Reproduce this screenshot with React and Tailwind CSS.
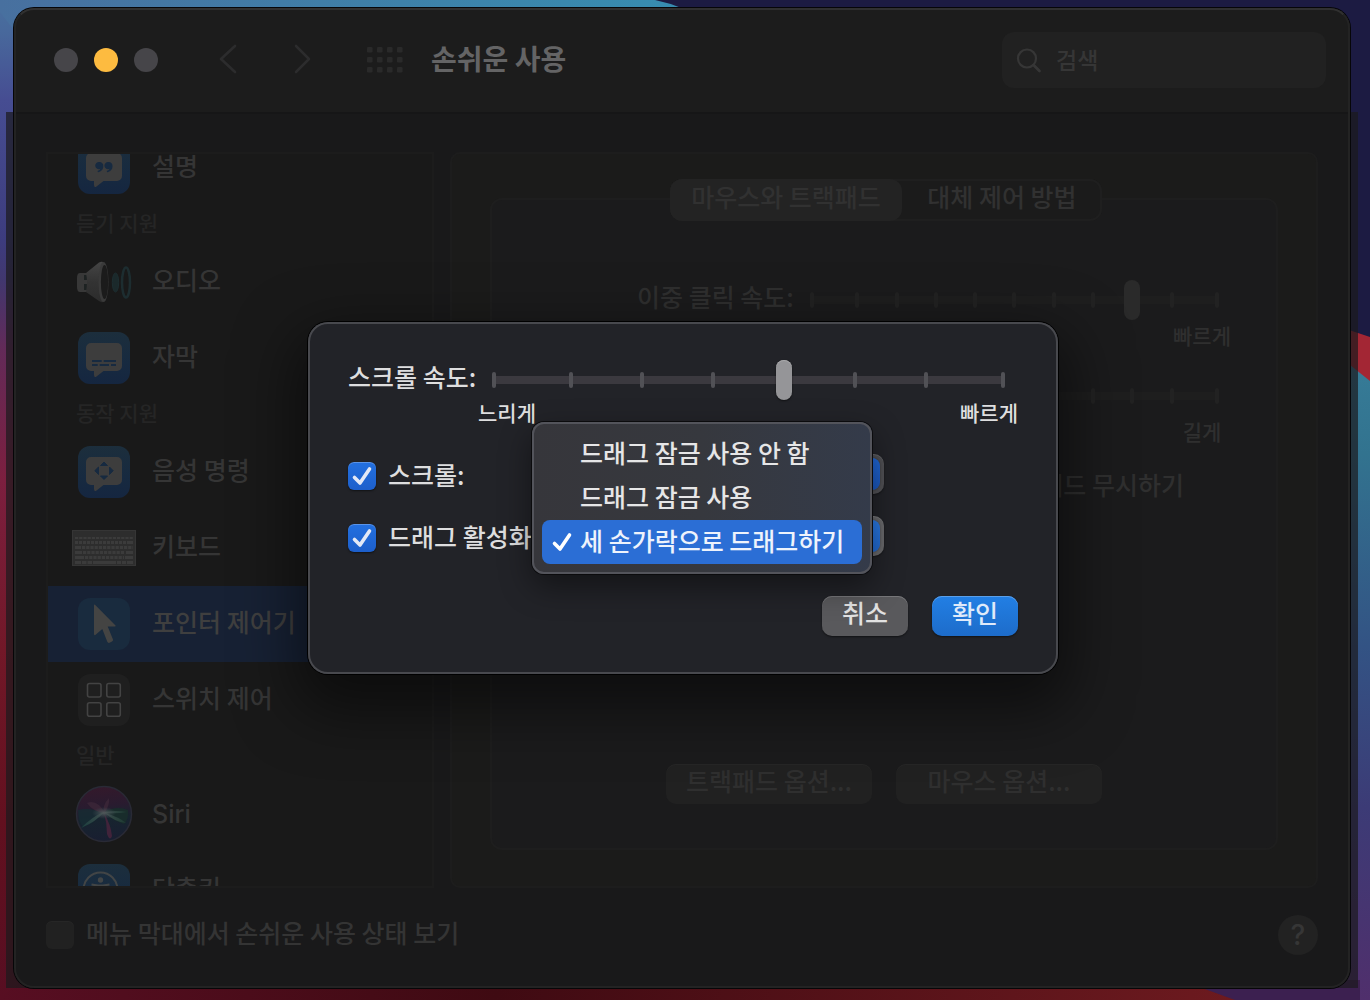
import React, { useState } from 'react';
import clsx from 'clsx';

const Wallpaper = () => (
  <svg
    className="absolute inset-0 w-full h-full"
    viewBox="0 0 1370 1000"
    preserveAspectRatio="none"
    aria-hidden="true"
  >
    <defs>
      <linearGradient id="wpTop" x1="0" x2="1" y1="0" y2="0">
        <stop offset="0" stopColor="#48709f" />
        <stop offset="1" stopColor="#378db0" />
      </linearGradient>
      <linearGradient id="wpLeft" x1="0" x2="0" y1="0" y2="1">
        <stop offset="0" stopColor="#48709f" />
        <stop offset="0.03" stopColor="#48699c" />
        <stop offset="0.1" stopColor="#464d92" />
        <stop offset="0.24" stopColor="#3d3c7e" />
        <stop offset="0.28" stopColor="#41376f" />
        <stop offset="0.35" stopColor="#632a58" />
        <stop offset="0.48" stopColor="#7c1f3f" />
        <stop offset="0.65" stopColor="#721828" />
        <stop offset="0.82" stopColor="#62101f" />
        <stop offset="1" stopColor="#570e22" />
      </linearGradient>
      <linearGradient id="wpRight" x1="0" x2="0" y1="0" y2="1">
        <stop offset="0" stopColor="#377c98" />
        <stop offset="0.15" stopColor="#32738f" />
        <stop offset="0.45" stopColor="#335384" />
        <stop offset="0.7" stopColor="#3c3b76" />
        <stop offset="1" stopColor="#502f6c" />
      </linearGradient>
      <linearGradient id="wpBottom" x1="0" x2="1" y1="0" y2="0">
        <stop offset="0" stopColor="#570e22" />
        <stop offset="0.4" stopColor="#3f0a12" />
        <stop offset="1" stopColor="#6d1a1f" />
      </linearGradient>
    </defs>
    <rect width="1370" height="1000" fill="#1c1b42" />
    <rect width="60" height="1000" fill="url(#wpLeft)" />
    <path d="M0 0H655Q670 3 684 9V30H14L0 12Z" fill="url(#wpTop)" />
    <path d="M1340 327L1370 337V382L1340 360Z" fill="#a32634" />
    <path d="M1340 357L1370 381V1000H1340Z" fill="url(#wpRight)" />
    <path d="M20 980H1180L1240 1000H0Z" fill="url(#wpBottom)" />
    <path d="M1180 980H1360V1000H1235Z" fill="#3c2050" />
  </svg>
);

const Tile = ({ children, plain }) => (
  <svg width="52" height="52" viewBox="0 0 52 52" fill="none" aria-hidden="true">
    <defs>
      <linearGradient id="tileBlue" x1="0" x2="0" y1="0" y2="1">
        <stop offset="0" stopColor="#1c2e3c" />
        <stop offset="0.6" stopColor="#172a40" />
        <stop offset="1" stopColor="#152640" />
      </linearGradient>
    </defs>
    <rect width="52" height="52" rx="12" fill={plain ? '#1f1f1f' : 'url(#tileBlue)'} />
    {children}
  </svg>
);

const Bubble = () => (
  <path
    d="M13 11H39A5 5 0 0 1 44 16V34A5 5 0 0 1 39 39H25.500L18.500 44.500Q16 46 16 43V39H13A5 5 0 0 1 8 34V16A5 5 0 0 1 13 11Z"
    fill="#3d3d3d"
  />
);

const DescriptionIcon = () => (
  <Tile>
    <Bubble />
    <g fill="#172a40">
      <path d="M21.500 20A3.800 3.800 0 0 1 25.300 24.200C25.300 27.500 23 29.800 20 30.200L19.500 29C21 28.500 22 27.800 22.300 26.800A3.600 3.600 0 1 1 21.500 20Z" />
      <path d="M30.700 20A3.800 3.800 0 0 1 34.500 24.200C34.500 27.500 32.200 29.800 29.200 30.200L28.700 29C30.200 28.500 31.200 27.800 31.500 26.800A3.600 3.600 0 1 1 30.700 20Z" />
    </g>
  </Tile>
);

const AudioIcon = () => (
  <svg width="58" height="42" viewBox="0 0 58 42" fill="none" aria-hidden="true">
    <defs>
      <linearGradient id="cone" x1="0" x2="0" y1="0" y2="1">
        <stop offset="0" stopColor="#454545" />
        <stop offset="0.5" stopColor="#333" />
        <stop offset="1" stopColor="#2c2c2c" />
      </linearGradient>
    </defs>
    <path d="M5 12H12V31H5Q2 31 2 26V17Q2 12 5 12Z" fill="#383838" />
    <path d="M9 14H12V19H9ZM9 23H12V29H9Z" fill="#1d2222" />
    <path d="M11 12L24 1.500Q26 .5 28 1V41Q26 41.500 24 40L11 31Q13 21 11 12Z" fill="url(#cone)" />
    <ellipse cx="28.500" cy="21" rx="5" ry="20" fill="#3a3a3a" />
    <ellipse cx="29.500" cy="21" rx="3.600" ry="17" fill="#1b1b1b" />
    <ellipse cx="40.500" cy="21.500" rx="3.200" ry="9.500" fill="#1b292b" stroke="#1d2e31" />
    <ellipse cx="51" cy="21.500" rx="4" ry="15" stroke="#1d2d30" strokeWidth="2.500" />
  </svg>
);

const CaptionsIcon = () => (
  <Tile>
    <Bubble />
    <path d="M14 29H23.700M25.700 29H38M14 33H19.700M21.700 33H31M33 33H38" stroke="#172a40" strokeWidth="2" />
  </Tile>
);

const VoiceIcon = () => (
  <Tile>
    <Bubble />
    <path
      d="M26 16L29.500 19.500H22.500ZM26 33.500L22.500 30H29.500ZM16.800 24.700L20.500 21V28.500ZM35.200 24.700L31.500 21V28.500Z"
      fill="#172a40"
      stroke="#172a40"
      strokeLinejoin="round"
    />
  </Tile>
);

const KeyboardIcon = () => (
  <svg width="64" height="36" viewBox="0 0 64 36" fill="none" aria-hidden="true">
    <rect width="64" height="36" fill="#2d2d2d" />
    <rect x=".5" y=".5" width="63" height="35" stroke="#353535" />
    <g stroke="#3b3b3b">
      <path d="M3 8H61" strokeWidth="2" strokeDasharray="3.200 1" />
      <path d="M3 12.500H55" strokeWidth="3" strokeDasharray="3 1" />
      <path d="M55 12.500H61M3 17.500H9M3 22.500H10M54 22.500H61M3 27.500H12M53 27.500H61" strokeWidth="3" />
      <path d="M10 17.500H61" strokeWidth="3" strokeDasharray="3.200 1" />
      <path d="M11 22.500H53" strokeWidth="3" strokeDasharray="3.200 1" />
      <path d="M13 27.500H52" strokeWidth="3" strokeDasharray="3.200 1" />
      <path d="M3 32.500H9M10 32.500H14.500M15.500 32.500H20M21 32.500H44M45 32.500H49M50 32.500H54M55 32.500H61" strokeWidth="3" />
    </g>
  </svg>
);

const PointerIcon = () => (
  <svg width="52" height="52" viewBox="0 0 52 52" aria-hidden="true">
    <rect width="52" height="52" rx="12" fill="#192b3e" />
    <path
      d="M17 6.800L37.500 27.500Q38 28.400 37 28.500H29.700L35 41.500Q35.300 43 34 43.600L31.500 44.800Q30 45.200 29.300 43.800L24.300 31L17.300 37Q16 37.500 16 36V7.200Q16.200 6 17 6.800Z"
      fill="#444443"
    />
  </svg>
);

const SwitchIcon = () => (
  <Tile plain>
    <g stroke="#434343" strokeWidth="1.600">
      <rect x="9.500" y="9.500" width="13.500" height="13.500" rx="2" />
      <rect x="28.800" y="9.500" width="13.500" height="13.500" rx="2" />
      <rect x="9.500" y="28.700" width="13.500" height="13.500" rx="2" />
      <rect x="28.800" y="28.700" width="13.500" height="13.500" rx="2" />
    </g>
  </Tile>
);

const SiriIcon = () => (
  <svg width="58" height="58" viewBox="0 0 58 58" aria-hidden="true">
    <defs>
      <linearGradient id="siri" x1="0.4" x2="0.5" y1="0" y2="1">
        <stop offset="0" stopColor="#34192b" />
        <stop offset="0.35" stopColor="#291b2f" />
        <stop offset="0.6" stopColor="#17242f" />
        <stop offset="1" stopColor="#191e31" />
      </linearGradient>
      <linearGradient id="siriRay" x1="0" x2="1" y1="0" y2="0">
        <stop offset="0" stopColor="#1c3f3e" />
        <stop offset="0.5" stopColor="#3b4b4b" />
        <stop offset="1" stopColor="#1c3a32" />
      </linearGradient>
      <radialGradient id="siriGlow">
        <stop offset="0" stopColor="#525a5b" />
        <stop offset="1" stopColor="#3b4a50" stopOpacity="0" />
      </radialGradient>
    </defs>
    <circle cx="29" cy="29" r="27.500" fill="url(#siri)" stroke="#292a35" strokeWidth="1.500" />
    <path d="M3 25Q15 22 29 28Q17 40 8 42Q3 35 3 25Z" fill="#162c33" opacity=".8" />
    <path d="M29 27Q42 20 53 25Q54 34 49 39Q38 36 29 27Z" fill="#182e2b" opacity=".9" />
    <path d="M12 18Q22 14 30 28Q18 27 12 18ZM34 13Q35 20 29 29Q27 20 34 13Z" fill="#382436" />
    <path d="M29 28Q36 40 37 51Q35 57 32 49Q32 38 29 28Z" fill="#41233a" />
    <path d="M6 43Q18 31 29 27Q22 36 6 43ZM30 27Q42 25 52 27Q42 29 30 28ZM30 28Q44 32 51 38Q40 37 30 28Z" fill="url(#siriRay)" />
    <ellipse cx="29" cy="28" rx="12" ry="6" fill="url(#siriGlow)" />
  </svg>
);

const ShortcutIcon = () => (
  <Tile>
    <circle cx="22.500" cy="25.500" r="17" stroke="#424546" strokeWidth="2" />
    <circle cx="22.500" cy="16" r="2.700" fill="#424546" />
    <path d="M13.500 20.500L20 21.500H25L31.500 20.500M22.500 22V29L18 38M22.500 29L27 38" stroke="#424546" strokeWidth="2.200" />
  </Tile>
);

const Check = ({ color }) => (
  <svg width="28" height="28" viewBox="0 0 28 28" fill="none" className="pointer-events-none" aria-hidden="true">
    <path d="M6.500 15.500L12 21L21.500 7" stroke={color} strokeWidth="3.600" strokeLinecap="round" strokeLinejoin="round" />
  </svg>
);

const sidebarItems = [
  { label: '설명', icon: DescriptionIcon },
  { header: '듣기 지원' },
  { label: '오디오', icon: AudioIcon },
  { label: '자막', icon: CaptionsIcon },
  { header: '동작 지원' },
  { label: '음성 명령', icon: VoiceIcon },
  { label: '키보드', icon: KeyboardIcon },
  { label: '포인터 제어기', icon: PointerIcon },
  { label: '스위치 제어', icon: SwitchIcon },
  { header: '일반' },
  { label: 'Siri', icon: SiriIcon },
  { label: '단축키', icon: ShortcutIcon },
];

const dragOptions = ['드래그 잠금 사용 안 함', '드래그 잠금 사용', '세 손가락으로 드래그하기'];

const Slider = ({ id, max, initial, dim }) => {
  const [value, setValue] = useState(initial);
  return (
    <div className="grid flex-1 items-center h-10">
      <div className={clsx('[grid-area:1/1] h-2 mx-0.5', dim ? 'bg-[#1e1e1e]' : 'bg-[#3b393f]')} />
      <div className="[grid-area:1/1] flex justify-between">
        {Array.from({ length: max + 1 }, (_, i) => (
          <span
            key={i}
            className={clsx(
              'w-1 h-4 rounded-full first:mr-1.5 last:ml-1.5',
              dim ? 'bg-[#222222]' : 'bg-[#515156]'
            )}
          />
        ))}
      </div>
      <input
        id={id}
        type="range"
        min="0"
        max={max}
        value={value}
        onChange={(e) => setValue(Number(e.target.value))}
        className={clsx(
          '[grid-area:1/1] w-full h-10 m-0 appearance-none bg-transparent outline-none [&::-webkit-slider-thumb]:appearance-none [&::-webkit-slider-thumb]:w-4 [&::-webkit-slider-thumb]:h-10 [&::-webkit-slider-thumb]:rounded-lg',
          dim
            ? '[&::-webkit-slider-thumb]:bg-[#2a2a2a]'
            : '[&::-webkit-slider-thumb]:bg-[#959598] [&::-webkit-slider-thumb]:shadow-[0_1px_2px_rgba(0,0,0,0.5),inset_0_1px_0_#a8a8aa]'
        )}
      />
    </div>
  );
};

const DialogCheckbox = ({ label }) => {
  const [checked, setChecked] = useState(true);
  return (
    <label className="mt-1 flex items-center gap-3 whitespace-nowrap">
      <span className="grid">
        <input
          type="checkbox"
          checked={checked}
          onChange={() => setChecked(!checked)}
          className="[grid-area:1/1] appearance-none w-7 h-7 rounded-md bg-[#4b4b4f] checked:bg-linear-to-b from-[#2370e0] to-[#1d5fcb] shadow-[inset_0_1px_0_rgba(255,255,255,0.25),0_1px_2px_rgba(0,0,0,0.5)]"
        />
        <span className="[grid-area:1/1] pointer-events-none">{checked && <Check color="#e3e9f6" />}</span>
      </span>
      <span className="-mt-1">{label}</span>
    </label>
  );
};

const PopupSelect = ({ label, value, options, bright, children }) => (
  <div className="relative w-[340px]">
    <select
      aria-label={label}
      defaultValue={value}
      className={clsx(
        'block w-full h-10 pl-4 pr-10 appearance-none rounded-[10px] text-[#e2e2e2] shadow-[inset_0_1px_0_rgba(255,255,255,0.12),0_1px_2px_rgba(0,0,0,0.4)]',
        bright ? 'bg-[#69696c]' : 'bg-[#515155]'
      )}
    >
      {options.map((o) => (
        <option key={o}>{o}</option>
      ))}
    </select>
    <span
      className={clsx(
        'absolute right-1 top-1 w-8 h-8 rounded-lg pointer-events-none shadow-[0_0_2px_rgba(0,0,0,0.4)]',
        bright ? 'bg-linear-to-b from-[#2a7ae6] to-[#2069d2]' : 'bg-linear-to-b from-[#2068d8] to-[#1b57bd]'
      )}
    />
    {children}
  </div>
);

const DragMenu = ({ selected, onSelect }) => (
  <div
    role="listbox"
    aria-label="드래그 활성화"
    className="absolute right-3 -bottom-[18px] z-10 w-[340px] p-[10px] rounded-xl bg-linear-to-r from-[#36363b] via-[#36383e] to-[#343b4a] shadow-[inset_0_0_0_2px_#53545b,0_0_0_1px_#0b0b0d,0_12px_32px_rgba(0,0,0,0.45)]"
  >
    {dragOptions.map((option) => {
      const isActive = option === selected;
      return (
        <button
          key={option}
          role="option"
          aria-selected={isActive}
          onClick={() => onSelect(option)}
          className={clsx(
            'flex items-center w-full h-11 pl-1.5 rounded-lg text-left whitespace-nowrap',
            isActive ? 'bg-[#2b6ed5] text-[#eef3fc]' : 'text-[#e6e6e7]'
          )}
        >
          <span className="w-8 shrink-0">{isActive && <Check color="#ffffff" />}</span>
          <span className="-mt-1">{option}</span>
        </button>
      );
    })}
  </div>
);

const ScrollDialog = () => {
  const [drag, setDrag] = useState(dragOptions[2]);
  return (
    <div className="absolute inset-0 pl-0.5 flex items-center justify-center">
      <div
        role="dialog"
        aria-label="트랙패드 옵션"
        className="w-[750px] px-10 py-[38px] rounded-[20px] bg-[#222328] text-[#dededf] shadow-[inset_0_0_0_2px_#48494e,0_0_0_1px_#000,0_24px_60px_12px_rgba(0,0,0,0.5)]"
      >
        <div className="flex items-center pr-[13px]">
          <label htmlFor="scroll-speed" className="w-36 shrink-0 -mt-2">스크롤 속도:</label>
          <Slider id="scroll-speed" max={7} initial={4} />
        </div>
        <div className="flex justify-between items-center h-7 pb-1 pl-[130px] text-[21px]">
          <span>느리게</span>
          <span>빠르게</span>
        </div>

        <div className="mt-[26px] flex flex-col gap-[22px] pr-[134px]">
          <div className="flex items-center justify-between h-10">
            <DialogCheckbox label="스크롤:" />
            <PopupSelect label="스크롤" value="관성 효과 사용" options={['관성 효과 사용', '관성 효과 사용 안 함']} />
          </div>
          <div className="flex items-center justify-between h-10">
            <div className="w-0">
              <DialogCheckbox label="드래그 활성화:" />
            </div>
            <PopupSelect key={drag} label="드래그 활성화" value={drag} options={dragOptions} bright>
              <DragMenu selected={drag} onSelect={setDrag} />
            </PopupSelect>
          </div>
        </div>

        <div className="mt-10 flex justify-end gap-6">
          <button className="w-[86px] h-10 pb-2 flex items-center justify-center rounded-[10px] bg-[#59595c] text-[#e2e2e2] shadow-[inset_0_1px_0_#77777a,0_1px_2px_rgba(0,0,0,0.5)]">
            취소
          </button>
          <button className="w-[86px] h-10 pb-2 flex items-center justify-center rounded-[10px] bg-linear-to-b from-[#227fe4] to-[#1d6cca] text-[#dfeafa] shadow-[inset_0_1px_0_#5a9fe9,0_1px_2px_rgba(0,0,0,0.5)]">
            확인
          </button>
        </div>
      </div>
    </div>
  );
};

const TitleBar = () => (
  <header className="flex items-center h-[106px] pl-10 pr-6 shrink-0 bg-[#1c1c1c] border-b-2 border-[#161617] rounded-t-[20px]">
    <div className="flex gap-4">
      <button aria-label="닫기" className="w-6 h-6 rounded-full bg-[#464549]" />
      <button aria-label="최소화" className="w-6 h-6 rounded-full bg-[#fdbb40]" />
      <button aria-label="확대/축소" className="w-6 h-6 rounded-full bg-[#464549]" />
    </div>
    <button aria-label="뒤로" className="ml-[60px] -mt-0.5">
      <svg width="20" height="32" viewBox="0 0 20 32" fill="none" stroke="#2c2c2d" strokeWidth="2.6" strokeLinecap="round" strokeLinejoin="round">
        <path d="M17 3L3 16L17 29" />
      </svg>
    </button>
    <button aria-label="앞으로" className="ml-[54px] -mt-0.5">
      <svg width="20" height="32" viewBox="0 0 20 32" fill="none" stroke="#2c2c2d" strokeWidth="2.6" strokeLinecap="round" strokeLinejoin="round">
        <path d="M4 3L17 16L4 29" />
      </svg>
    </button>
    <button aria-label="모두 보기" className="ml-[55px]">
      <svg width="36" height="28" viewBox="0 0 36 28" fill="#2a2a2a">
        {[0, 10, 20, 30].map((x) =>
          [0, 10, 20].map((y) => <rect key={`${x}-${y}`} x={x} y={y + 1} width="5.500" height="5.500" rx="1.300" />)
        )}
      </svg>
    </button>
    <h1 className="ml-7 -mt-1 text-[28px] font-bold text-[#646465]">손쉬운 사용</h1>
    <label className="ml-auto flex items-center gap-3 w-[324px] h-14 pl-[14px] rounded-xl bg-[#212121] text-[23px]">
      <svg width="28" height="28" viewBox="0 0 28 28" fill="none" stroke="#363636" strokeWidth="2.200" strokeLinecap="round" className="shrink-0">
        <circle cx="11" cy="12.500" r="9" />
        <path d="M17.500 19L23.500 25" strokeWidth="2.800" />
      </svg>
      <input
        type="text"
        aria-label="검색"
        placeholder="검색"
        className="flex-1 min-w-0 pb-0.5 bg-transparent outline-none placeholder:text-[#363636] text-[#666666]"
      />
    </label>
  </header>
);

const Sidebar = ({ current, onSelect }) => (
  <nav className="w-[388px] shrink-0 overflow-hidden border-2 border-[#1c1c1c] bg-[#191919]">
    <div className="-mt-6">
      {sidebarItems.map((item) => {
        if (item.header) {
          return (
            <div key={item.header} className="flex items-center h-[38px] pl-7 pb-1.5 text-[21px] text-[#252525]">
              {item.header}
            </div>
          );
        }
        const Icon = item.icon;
        return (
          <button
            key={item.label}
            onClick={() => onSelect(item.label)}
            className={clsx(
              'flex items-center gap-4 w-full h-[76px] pl-6 text-left',
              item.label === current ? 'bg-[#172134] text-[#3f3f3f]' : 'text-[#353535]'
            )}
          >
            <span className="w-16 flex justify-center">
              <Icon />
            </span>
            <span className={item.label === 'Siri' ? "font-['Inter',sans-serif]" : '-mt-1.5'}>{item.label}</span>
          </button>
        );
      })}
    </div>
  </nav>
);

const tabs = [
  { name: '마우스와 트랙패드', width: 'w-[232px]' },
  { name: '대체 제어 방법', width: 'w-[200px]' },
];

const PointerPanel = () => {
  const [tab, setTab] = useState(tabs[0].name);
  return (
    <main className="flex-1 flex flex-col px-[38px] pt-[25px] pb-9 rounded-[10px] border-2 border-[#1d1d1d] bg-[#1b1b1a]">
      <div className="relative z-[1] flex justify-center pl-1">
        <div role="tablist" className="flex h-[42px] rounded-xl bg-[#1b1b1b] shadow-[inset_0_0_0_2px_#1f1f1f]">
          {tabs.map(({ name, width }) => (
            <button
              key={name}
              role="tab"
              aria-selected={name === tab}
              onClick={() => setTab(name)}
              className={clsx(
                width,
                'pb-2 rounded-xl text-[#313131] whitespace-nowrap',
                name === tab && 'bg-[#232323]'
              )}
            >
              {name}
            </button>
          ))}
        </div>
      </div>
      <div className="-mt-[23px] flex-1 flex flex-col pt-20 pb-11 rounded-xl border-2 border-[#1e1e1e] bg-[#1b1b1c] text-[#2f2f2f]">
        <div className="flex items-center pl-[145px] pr-[57px]">
          <label htmlFor="double-click" className="w-[173px] shrink-0 -mt-2">이중 클릭 속도:</label>
          <Slider id="double-click" max={10} initial={8} dim />
        </div>
        <div className="flex items-center justify-between h-[34px] pb-1 pl-[305px] pr-11 text-[21px] whitespace-nowrap">
          <span className="w-[60px] text-center">느리게</span>
          <span className="w-[60px] text-center">빠르게</span>
        </div>
        <div className="mt-[22px] flex items-center pl-[145px] pr-[57px]">
          <label htmlFor="spring-delay" className="w-[173px] shrink-0 -mt-2">지연 시간:</label>
          <Slider id="spring-delay" max={10} initial={4} dim />
        </div>
        <div className="flex items-center justify-between h-[34px] pb-1 pl-[305px] pr-11 text-[21px] whitespace-nowrap">
          <span className="w-[60px] text-center">짧게</span>
          <span className="w-[60px] text-center">길게</span>
        </div>
        <label className="mt-4 flex items-center justify-end gap-3 h-10 pb-1 pr-[92px] whitespace-nowrap">
          <input type="checkbox" className="appearance-none w-7 h-7 rounded-md bg-[#222222]" />
          내장된 트랙패드 무시하기
        </label>
        <div className="mt-auto flex justify-center gap-6">
          <button className="w-[206px] h-10 pb-2 flex items-center justify-center rounded-[10px] bg-[#212121] shadow-[inset_0_1px_0_#262626]">트랙패드 옵션...</button>
          <button className="w-[206px] h-10 pb-2 flex items-center justify-center rounded-[10px] bg-[#212121] shadow-[inset_0_1px_0_#262626]">마우스 옵션...</button>
        </div>
      </div>
    </main>
  );
};

const App = () => {
  const [current, setCurrent] = useState('포인터 제어기');
  return (
    <div className="relative h-screen overflow-hidden pt-2 pr-5 pb-3 pl-[14px] font-['Noto_Sans_CJK_KR',sans-serif] font-medium text-[25px] leading-8">
      <Wallpaper />
      {/* Dimmed strip that the sheet leaves around the window body */}
      <div className="absolute left-1.5 right-3 top-28 bottom-3 bg-[#1b1a1d]/70" />

      <div className="relative h-full flex flex-col rounded-[20px] bg-[#19191a] shadow-[0_0_0_1px_#060608]">
        <TitleBar />
        <div className="flex-1 min-h-0 flex gap-4 px-8 pt-[38px]">
          <Sidebar current={current} onSelect={setCurrent} />
          <PointerPanel />
        </div>
        <footer className="flex items-center justify-between px-8 pt-[27px] pb-[33px] text-[#343434]">
          <label className="flex items-center gap-3">
            <input type="checkbox" className="appearance-none w-7 h-7 rounded-md bg-[#212121] shadow-[inset_0_1px_0_#262626]" />
            <span className="-mt-1.5">메뉴 막대에서 손쉬운 사용 상태 보기</span>
          </label>
          <button aria-label="도움말" className="w-10 h-10 rounded-full bg-[#222222] font-['Inter',sans-serif] text-[28px] text-[#363636]">?</button>
        </footer>
        {/* Light rim over the window edge */}
        <div className="absolute inset-0 rounded-[20px] border-2 border-[#232323] border-t-[#303030] pointer-events-none" />
        <ScrollDialog />
      </div>
    </div>
  );
};

export default App;
